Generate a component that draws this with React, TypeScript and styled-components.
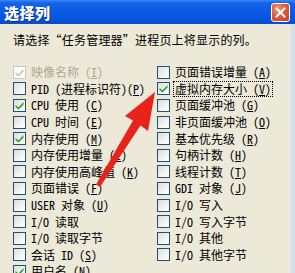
import React from 'react';
import styled, { createGlobalStyle } from 'styled-components';

const GlobalStyle = createGlobalStyle`
  html, body {
    margin: 0;
    padding: 0;
    background: #ece9d8;
  }
`;

type Item = {
  label: string;
  key?: string;
  checked?: boolean;
  disabled?: boolean;
  focused?: boolean;
};

const leftItems: Item[] = [
  { label: '映像名称 ', key: 'I', checked: true, disabled: true },
  { label: 'PID (进程标识符)', key: 'P' },
  { label: 'CPU 使用 ', key: 'C', checked: true },
  { label: 'CPU 时间 ', key: 'E' },
  { label: '内存使用 ', key: 'M', checked: true },
  { label: '内存使用增量 ', key: 'I' },
  { label: '内存使用高峰值 ', key: 'K' },
  { label: '页面错误 ', key: 'F' },
  { label: 'USER 对象 ', key: 'U' },
  { label: 'I/O 读取' },
  { label: 'I/O 读取字节' },
  { label: '会话 ID ', key: 'S' },
  { label: '用户名 ', key: 'N', checked: true },
];

const rightItems: Item[] = [
  { label: '页面错误增量 ', key: 'A' },
  { label: '虚拟内存大小 ', key: 'V', checked: true, focused: true },
  { label: '页面缓冲池 ', key: 'G' },
  { label: '非页面缓冲池 ', key: 'O' },
  { label: '基本优先级 ', key: 'R' },
  { label: '句柄计数 ', key: 'H' },
  { label: '线程计数 ', key: 'T' },
  { label: 'GDI 对象 ', key: 'J' },
  { label: 'I/O 写入' },
  { label: 'I/O 写入字节' },
  { label: 'I/O 其他' },
  { label: 'I/O 其他字节' },
];

const Window = styled.div`
  position: relative;
  width: 295px;
  height: 273px;
  overflow: hidden;
  display: flex;
  flex-direction: column;
  background: #ece9d8;
  font-family: 'Noto Sans Mono CJK SC', 'Liberation Mono', 'Noto Sans CJK SC', monospace;
  font-size: 12px;
  color: #000;
`;

const TitleBar = styled.div`
  height: 24px;
  flex: none;
  display: flex;
  align-items: center;
  justify-content: space-between;
  padding: 0 5px 0 4px;
  background: linear-gradient(to bottom, #3c86f4 0%, #1464ea 12%, #0a5ae4 45%, #0654dc 85%, #0a4cc8 100%);
`;

const Title = styled.span`
  color: #fff;
  font-family: 'Noto Sans CJK SC', sans-serif;
  font-weight: 900;
  font-size: 15px;
  letter-spacing: 0.5px;
  text-shadow: 1px 1px 0 #0a2f8a;
`;

const CloseButton = styled.div`
  width: 17px;
  height: 17px;
  border: 1px solid #fff;
  border-radius: 3px;
  background: radial-gradient(circle at 35% 30%, #f39a7c 0%, #e35a36 45%, #c8401f 100%);
  display: flex;
  align-items: center;
  justify-content: center;
`;

const Frame = styled.div`
  flex: 1;
  display: flex;
`;

const Body = styled.div`
  flex: 1;
  padding: 8px 0 0 13px;
`;

const RightEdge = styled.div`
  width: 4px;
  background: #d2dff0;
`;

const Instruction = styled.div`
  height: 16px;
  line-height: 16px;
  font-family: 'Noto Sans CJK SC', sans-serif;
  letter-spacing: 0.2px;
`;

const Columns = styled.div`
  margin-top: 16px;
  display: grid;
  grid-template-columns: 144px 1fr;
`;

const Column = styled.div`
  display: flex;
  flex-direction: column;
`;

const Row = styled.div<{ $disabled?: boolean }>`
  height: 16.6px;
  display: flex;
  align-items: center;
  white-space: pre;
  color: ${(p) => (p.$disabled ? '#aca899' : '#000')};
`;

const Box = styled.span<{ $disabled?: boolean }>`
  flex: none;
  width: 11px;
  height: 11px;
  margin-right: 4px;
  border: 1px solid ${(p) => (p.$disabled ? '#cac8bb' : '#1c5180')};
  background: ${(p) =>
    p.$disabled ? '#fff' : 'linear-gradient(135deg, #dcdcd7 0%, #f3f3ef 60%, #fff 100%)'};
  display: flex;
  align-items: center;
  justify-content: center;
`;

const Label = styled.span<{ $focused?: boolean }>`
  padding: 0 1px;
  line-height: 14px;
  outline: ${(p) => (p.$focused ? '1px dotted #000' : 'none')};
  outline-offset: 0;
`;

const Arrow = styled.svg`
  position: absolute;
  left: 0;
  top: 0;
  pointer-events: none;
`;

const Check = ({ color }: { color: string }) => (
  <svg width="9" height="9" viewBox="0 0 9 9">
    <path d="M0.5 4 L3.5 6.5 L8.5 1 L8.5 3.5 L3.5 8.5 L0.5 6 Z" fill={color} />
  </svg>
);

const CheckRow = ({ item }: { item: Item }) => (
  <Row $disabled={item.disabled}>
    <Box $disabled={item.disabled}>
      {item.checked ? <Check color={item.disabled ? '#c2c0b2' : '#21a121'} /> : null}
    </Box>
    <Label $focused={item.focused}>
      {item.label}
      {item.key ? (
        <>
          (<u>{item.key}</u>)
        </>
      ) : null}
    </Label>
  </Row>
);

export default function App() {
  return (
    <Window>
      <GlobalStyle />
      <TitleBar>
        <Title>选择列</Title>
        <CloseButton>
          <svg width="11" height="11" viewBox="0 0 11 11">
            <path d="M1.5 1.5 L9.5 9.5 M9.5 1.5 L1.5 9.5" stroke="#fff" strokeWidth="2" strokeLinecap="square" />
          </svg>
        </CloseButton>
      </TitleBar>
      <Frame>
        <Body>
          <Instruction>请选择“任务管理器”进程页上将显示的列。</Instruction>
          <Columns>
            <Column>
              {leftItems.map((it, i) => (
                <CheckRow key={i} item={it} />
              ))}
            </Column>
            <Column>
              {rightItems.map((it, i) => (
                <CheckRow key={i} item={it} />
              ))}
            </Column>
          </Columns>
        </Body>
        <RightEdge />
      </Frame>
      <Arrow width="295" height="273" viewBox="0 0 295 273">
        <polygon
          points="155,92 148,131 140.5,125.5 100,187 96,184.5 133,120.5 125,116"
          fill="#e8231b"
        />
      </Arrow>
    </Window>
  );
}
